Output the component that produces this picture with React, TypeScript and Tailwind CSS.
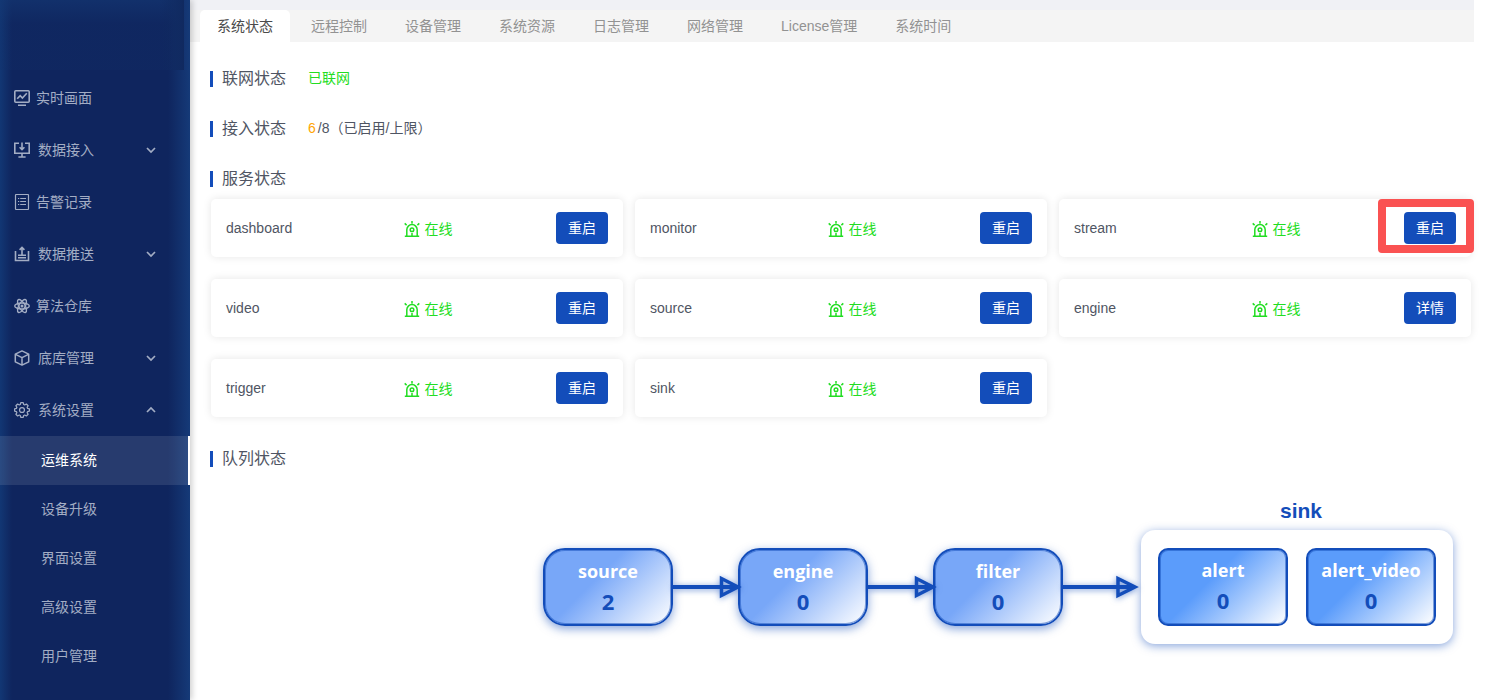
import React from "react";

const MonitorChart = () => (
  <svg viewBox="0 0 16 16" className="size-4" fill="none" stroke="currentColor" strokeWidth="1.6" aria-hidden="true">
    <rect x="0.8" y="0.8" width="14.4" height="11.4" rx="1" />
    <path d="M3.200 8.800l3-3.200 2.200 2.400 4.400-4.800M4 15.200h8" />
  </svg>
);
const MonitorDown = () => (
  <svg viewBox="0 0 16 16" className="size-4" fill="none" stroke="currentColor" strokeWidth="1.6" aria-hidden="true">
    <path d="M5 1.200H.8v10h14.400v-10H11M8 .6v6.600M5.600 5.200L8 7.600l2.400-2.400M8 11.200v3.400M4.400 15h7.200" />
  </svg>
);
const ListDoc = () => (
  <svg viewBox="0 0 16 16" className="size-4" fill="none" stroke="currentColor" strokeWidth="1.2" aria-hidden="true">
    <rect x="1.500" y="0.500" width="13" height="15" rx="0.8" />
    <path d="M4 4.500h1.200M6.200 4.500H12M4 7.500h1.200M6.200 7.500H12M4 10.500h1.200M6.200 10.500H12" />
  </svg>
);
const PushUp = () => (
  <svg viewBox="0 0 16 16" className="size-4" fill="none" stroke="currentColor" strokeWidth="1.6" aria-hidden="true">
    <path d="M1.500 5v9.500h13V5M4 11.800h8M4 9.200h8M8 8.600V1.600M5.600 3.900L8 1.400l2.400 2.500" />
  </svg>
);
const Atom = () => (
  <svg viewBox="0 0 16 16" className="size-4" fill="none" stroke="currentColor" strokeWidth="1.4" aria-hidden="true">
    <ellipse cx="8" cy="8" rx="7.300" ry="3" />
    <ellipse cx="8" cy="8" rx="7.300" ry="3" transform="rotate(60 8 8)" />
    <ellipse cx="8" cy="8" rx="7.300" ry="3" transform="rotate(120 8 8)" />
    <circle cx="8" cy="8" r="0.800" />
  </svg>
);
const Cube = () => (
  <svg viewBox="0 0 16 16" className="size-4" fill="none" stroke="currentColor" strokeWidth="1.5" strokeLinejoin="round" aria-hidden="true">
    <path d="M8 .9l6.700 3.300v7.600L8 15.100l-6.700-3.300V4.200zM1.500 4.400L8 7.700l6.500-3.300M8 7.700V15" />
  </svg>
);
const Gear = () => (
  <svg viewBox="-1 0 26 26" className="size-4" fill="none" stroke="currentColor" strokeWidth="2" strokeLinejoin="round" aria-hidden="true">
    <path d="M10 1.200h4l.8 2.900 1.600.7 2.700-1.500 2.800 2.800-1.500 2.700.7 1.600 2.900.8v3.600l-2.900.8-.7 1.600 1.500 2.700-2.800 2.800-2.700-1.500-1.600.7-.8 2.900h-4l-.8-2.900-1.600-.7-2.700 1.500-2.800-2.800 1.500-2.700-.7-1.600-2.900-.8v-3.600l2.900-.8.7-1.600-1.500-2.700 2.800-2.800 2.700 1.500 1.600-.7z" />
    <circle cx="12" cy="13" r="4" />
  </svg>
);
const Chevron = ({ up = false }: { up?: boolean }) => (
  <svg viewBox="0 0 10 10" className="mr-[34px] ml-auto size-[10px]" fill="none" stroke="currentColor" strokeWidth="1.700" aria-hidden="true">
    <path d={up ? "M1 7l4-4 4 4" : "M1 3l4 4 4-4"} />
  </svg>
);
const Siren = () => (
  <svg viewBox="0 0 16 16" className="size-4" fill="none" stroke="currentColor" strokeWidth="1.500" aria-hidden="true">
    <path d="M.8 15.300h14.400M2.800 15V8.800a5.200 5.200 0 0 1 10.400 0V15M8 0v2.400M.7 2.400l1.900 1.700M15.300 2.400l-1.900 1.700M8 12v3" />
    <circle cx="8" cy="8.800" r="1.800" />
  </svg>
);

const MENU = [
  { label: "实时画面", Icon: MonitorChart },
  { label: "数据接入", Icon: MonitorDown, arrow: "down" },
  { label: "告警记录", Icon: ListDoc },
  { label: "数据推送", Icon: PushUp, arrow: "down" },
  { label: "算法仓库", Icon: Atom },
  { label: "底库管理", Icon: Cube, arrow: "down" },
  { label: "系统设置", Icon: Gear, arrow: "up" },
];
const SUBMENU = ["运维系统", "设备升级", "界面设置", "高级设置", "用户管理"];
const TABS = ["系统状态", "远程控制", "设备管理", "系统资源", "日志管理", "网络管理", "License管理", "系统时间"];
const SERVICES = [
  { name: "dashboard", action: "重启" },
  { name: "monitor", action: "重启" },
  { name: "stream", action: "重启", marked: true },
  { name: "video", action: "重启" },
  { name: "source", action: "重启" },
  { name: "engine", action: "详情" },
  { name: "trigger", action: "重启" },
  { name: "sink", action: "重启" },
];

function Sidebar() {
  return (
    <aside className="z-10 w-[190px] shrink-0 bg-[#0f255e] bg-[linear-gradient(to_right,#123774,transparent_12px,transparent_calc(100%-22px),#153a78)] text-[#a3adc4] shadow-[2px_0_6px_rgba(0,0,0,0.2)]">
      <div className="mr-[6px] h-[70px] bg-[linear-gradient(to_left,#10295f,transparent_24px),linear-gradient(#14387499,#12306a33_24px,#12306a33)]" />
      <nav className="pt-[2px]">
        {MENU.map(({ label, Icon, arrow }) => (
          <a key={label} href="#" className="flex h-[52px] items-center pl-[14px]">
            <Icon />
            <span className={arrow ? "ml-2" : "ml-[6px]"}>{label}</span>
            {arrow && <Chevron up={arrow === "up"} />}
          </a>
        ))}
        {SUBMENU.map((label, i) => (
          <a
            key={label}
            href="#"
            className={
              i === 0
                ? "flex h-[49px] items-center border-r-2 border-white bg-white/10 pb-[2px] pl-[41px] text-white"
                : "flex h-[49px] items-center pb-[2px] pl-[41px]"
            }
          >
            {label}
          </a>
        ))}
      </nav>
    </aside>
  );
}

function Heading({ children }: { children: React.ReactNode }) {
  return (
    <h2 className="flex items-center gap-[9px] text-base leading-5">
      <span className="h-4 w-[3px] bg-[#134dba]" />
      {children}
    </h2>
  );
}

function Node({ name, value, inner = false }: { name: string; value: number; inner?: boolean }) {
  return (
    <div
      className={
        inner
          ? "flex h-[78px] w-[130px] flex-col items-center rounded-[10px] border-2 border-[#134dba] bg-linear-[135deg,#5b9cfb_40%,#ffffff] pt-[5px] shadow-[inset_0_0_0_1px_rgba(19,77,186,0.5)]"
          : "flex h-[78px] w-[130px] flex-col items-center rounded-[22px] border-2 border-[#134dba] bg-linear-[135deg,#78a7f8_40%,#ffffff] pt-[6px] shadow-[inset_0_0_0_1px_rgba(19,77,186,0.5),0_3px_10px_rgba(19,77,186,0.5)]"
      }
    >
      <span className="font-['Open_Sans','Noto_Sans',sans-serif] text-lg leading-[30px] font-bold text-white">{name}</span>
      <span className="font-['Open_Sans','Noto_Sans',sans-serif] text-[22px] leading-[30px] font-bold text-[#134dba]">{value}</span>
    </div>
  );
}

function Arrow({ last = false }: { last?: boolean }) {
  return (
    <svg
      viewBox={last ? "0 0 78 40" : "0 0 65 40"}
      className={
        last
          ? "h-10 w-[78px] overflow-visible drop-shadow-[0_1px_3px_rgba(19,77,186,0.6)]"
          : "relative z-10 h-10 w-[65px] overflow-visible drop-shadow-[0_1px_3px_rgba(19,77,186,0.6)]"
      }
      fill="none"
      stroke="#134dba"
      aria-hidden="true"
    >
      <path d={last ? "M0 20h70" : "M0 20h62"} strokeWidth="4" />
      <path d={last ? "M55 11.500v17L72 20z" : "M48.500 11.500v17L65 20z"} strokeWidth="3.500" />
    </svg>
  );
}

export default function App() {
  return (
    <div className="flex min-h-screen bg-white font-['Liberation_Sans','Noto_Sans_CJK_SC',sans-serif] text-sm text-[#4f5563]">
      <Sidebar />
      <main className="min-w-0 flex-1 pr-[38px]">
        <div className="h-[10px] bg-[#f0f1f5]" />
        <div role="tablist" className="flex h-8 gap-1 bg-[#f4f4f4] pl-[10px]">
          {TABS.map((tab, i) => (
            <button
              key={tab}
              role="tab"
              aria-selected={i === 0}
              className={i === 0 ? "rounded-t-[5px] bg-white px-[17px] text-[#4a4a4a]" : "px-[17px] text-[#929292]"}
            >
              {tab}
            </button>
          ))}
        </div>

        <div className="pt-[27px] pl-5">
          <section className="flex h-5 items-center gap-[22px]">
            <Heading>联网状态</Heading>
            <span className="pb-[2px] text-[#22dd22]">已联网</span>
          </section>
          <section className="mt-[30px] flex h-5 items-center gap-[22px]">
            <Heading>接入状态</Heading>
            <span className="pb-[2px]">
              <span className="mr-[2px] text-[#ffa500]">6</span>/8（已启用/上限）
            </span>
          </section>

          <section className="mt-[30px]">
            <Heading>服务状态</Heading>
            <ul className="mt-[10px] mr-[3px] grid grid-cols-3 gap-x-3 gap-y-[22px] pl-px">
              {SERVICES.map(({ name, action, marked }) => (
                <li
                  key={name}
                  className="relative grid h-[58px] grid-cols-[1fr_auto_1fr] items-center rounded-[5px] px-[15px] shadow-[0_0_8px_rgba(0,0,0,0.1)]"
                >
                  <span>{name}</span>
                  <span className="flex items-center gap-[5px] pt-[2px] pl-[22px] text-[#22dd22]">
                    <Siren />
                    在线
                  </span>
                  <button className="h-8 w-[52px] justify-self-end rounded-[4px] bg-[#134dba] text-white">{action}</button>
                  {marked && (
                    <span className="pointer-events-none absolute top-0 -right-[3px] h-[54px] w-24 rounded-[4px] border-8 border-[#fa5252]" />
                  )}
                </li>
              ))}
            </ul>
          </section>

          <section className="mt-8">
            <Heading>队列状态</Heading>
            <div className="mt-[30px] flex items-end justify-end pr-[21px] pb-14">
              <div className="flex h-[114px] items-center">
                <Node name="source" value={2} />
                <Arrow />
                <Node name="engine" value={0} />
                <Arrow />
                <Node name="filter" value={0} />
                <Arrow last />
              </div>
              <div className="text-center">
                <h3 className="mb-[7px] pl-2 text-[21px] leading-6 font-bold text-[#134dba]">sink</h3>
                <div className="flex h-[114px] items-center gap-[18px] rounded-[14px] px-[17px] shadow-[0_2px_10px_rgba(19,77,186,0.5)]">
                  <Node inner name="alert" value={0} />
                  <Node inner name="alert_video" value={0} />
                </div>
              </div>
            </div>
          </section>
        </div>
      </main>
    </div>
  );
}
